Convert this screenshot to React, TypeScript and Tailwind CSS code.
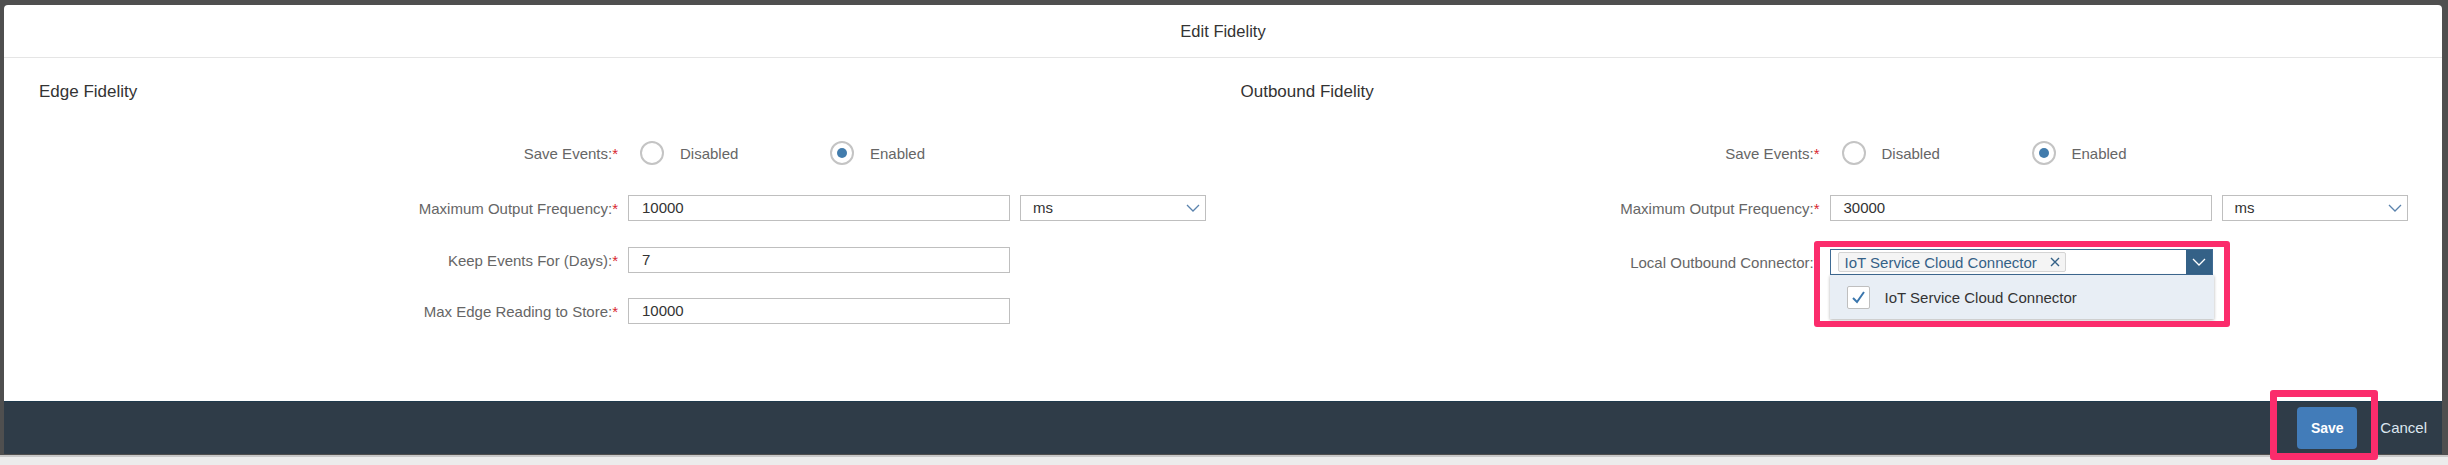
import React from "react";

const Chevron = ({ className = "" }: { className?: string }) => (
  <svg width="14" height="8" viewBox="0 0 14 8" className={className}>
    <polyline points="1,1 7,7 13,1" fill="none" stroke="currentColor" strokeWidth="1.3" />
  </svg>
);

const Label = ({ text }: { text: string }) => (
  <div className="w-[579px] shrink-0 text-right text-[15px] leading-none text-[#666]">
    {text}
    <span className="text-[#d9262f]">*</span>
  </div>
);

const TextBox = ({ value }: { value: string }) => (
  <div className="ml-[10px] flex h-[26px] w-[382px] items-center border border-[#bfbfbf] bg-white pl-[13px] text-[15px] text-[#333]">
    {value}
  </div>
);

const SelectBox = ({ value }: { value: string }) => (
  <div className="ml-[10px] flex h-[26px] w-[186px] items-center justify-between border border-[#bfbfbf] bg-white pl-[12px] pr-[5px] text-[15px] text-[#333]">
    <span>{value}</span>
    <Chevron className="text-[#5a83ad]" />
  </div>
);

const Radio = ({ label, checked }: { label: string; checked?: boolean }) => (
  <div className="flex w-[190px] items-center pl-[12px]">
    <span className="flex h-[24px] w-[24px] items-center justify-center rounded-full border-2 border-[#c4c4c4] bg-white">
      {checked && <span className="h-[10px] w-[10px] rounded-full bg-[#427cac]" />}
    </span>
    <span className="ml-[16px] text-[15px] leading-none text-[#666]">{label}</span>
  </div>
);

const SaveEventsRow = () => (
  <div className="mt-[39px] flex h-[26px] items-center">
    <Label text="Save Events:" />
    <div className="ml-[10px] flex">
      <Radio label="Disabled" />
      <Radio label="Enabled" checked />
    </div>
  </div>
);

const FieldRow = ({ label, children, mt }: { label: string; children: React.ReactNode; mt: string }) => (
  <div className={`flex h-[26px] items-center ${mt}`}>
    <Label text={label} />
    {children}
  </div>
);

const ConnectorCombo = () => (
  <div className="relative ml-[10px] h-[26px] w-[383px]">
    <div className="flex h-full items-center border border-[#3f6b94] bg-white">
      <div className="ml-[7px] flex h-[20px] items-center rounded-[2px] border border-[#d4d4d4] bg-[#f4f4f4] pl-[6px] pr-[5px] text-[15px] leading-none text-[#346187]">
        IoT Service Cloud Connector
        <svg width="10" height="10" viewBox="0 0 10 10" className="ml-[13px]">
          <path d="M1 1 L9 9 M9 1 L1 9" stroke="#346187" strokeWidth="1.4" />
        </svg>
      </div>
      <div className="ml-auto flex h-full w-[26px] items-center justify-center bg-[#346187] text-white">
        <Chevron />
      </div>
    </div>
    {/* open dropdown list */}
    <div className="absolute left-0 top-[26px] flex h-[44px] w-[384px] items-center bg-[#e8eef5] pl-[17px] shadow-[0_1px_3px_rgba(0,0,0,0.3)]">
      <span className="flex h-[23px] w-[23px] items-center justify-center rounded-[2px] border border-[#bfbfbf] bg-white">
        <svg width="15" height="13" viewBox="0 0 15 13">
          <polyline points="2,7 6,11 13,1" fill="none" stroke="#3a76ad" strokeWidth="2" />
        </svg>
      </span>
      <span className="ml-[15px] text-[15px] leading-none text-[#333]">IoT Service Cloud Connector</span>
    </div>
  </div>
);

export default function App() {
  return (
    <div className="relative h-[465px] w-[2448px] overflow-hidden bg-[#ececec] font-['Liberation_Sans',Arial,sans-serif]">
      <div className="h-[455px] bg-[#4f4f4f] pl-[4px] pr-[6px] pt-[5px]">
        <div className="flex h-[449px] flex-col overflow-hidden rounded-t-[4px] bg-white">
          <div className="flex h-[53px] shrink-0 items-center justify-center border-b border-[#e5e5e5] text-[16.5px] text-[#333]">
            Edit Fidelity
          </div>

          <div className="flex flex-1 pl-[35px] pt-[25px]">
            <div className="w-[1202px]">
              <h3 className="text-[17px] leading-[18px] text-[#333]">Edge Fidelity</h3>
              <SaveEventsRow />
              <FieldRow label="Maximum Output Frequency:" mt="mt-[29px]">
                <TextBox value="10000" />
                <SelectBox value="ms" />
              </FieldRow>
              <FieldRow label="Keep Events For (Days):" mt="mt-[26px]">
                <TextBox value="7" />
              </FieldRow>
              <FieldRow label="Max Edge Reading to Store:" mt="mt-[25px]">
                <TextBox value="10000" />
              </FieldRow>
            </div>

            <div className="w-[1202px]">
              <h3 className="text-[17px] leading-[18px] text-[#333]">Outbound Fidelity</h3>
              <SaveEventsRow />
              <FieldRow label="Maximum Output Frequency:" mt="mt-[29px]">
                <TextBox value="30000" />
                <SelectBox value="ms" />
              </FieldRow>
              <FieldRow label="Local Outbound Connector:" mt="mt-[28px]">
                <ConnectorCombo />
              </FieldRow>
            </div>
          </div>

          <div className="flex h-[53px] shrink-0 items-center justify-end border-t border-[#1f3a4d] bg-[#2f3c48] pr-[15px]">
            <button className="h-[42px] w-[60px] rounded-[4px] bg-[#427cb9] text-[14px] font-bold text-white">
              Save
            </button>
            <button className="ml-[23px] text-[15px] text-[#dce6f0]">Cancel</button>
          </div>
        </div>
      </div>
      <div className="h-[10px] border-t-2 border-[#c8c8c8] bg-[#ececec]" />

      {/* pink annotation boxes */}
      <div className="absolute left-[1814px] top-[241px] h-[86px] w-[416px] rounded-[3px] border-[6px] border-[#fb2c6c]" />
      <div className="absolute left-[2270px] top-[390px] h-[70px] w-[108px] rounded-[3px] border-[7px] border-[#fb2c6c]" />
    </div>
  );
}
